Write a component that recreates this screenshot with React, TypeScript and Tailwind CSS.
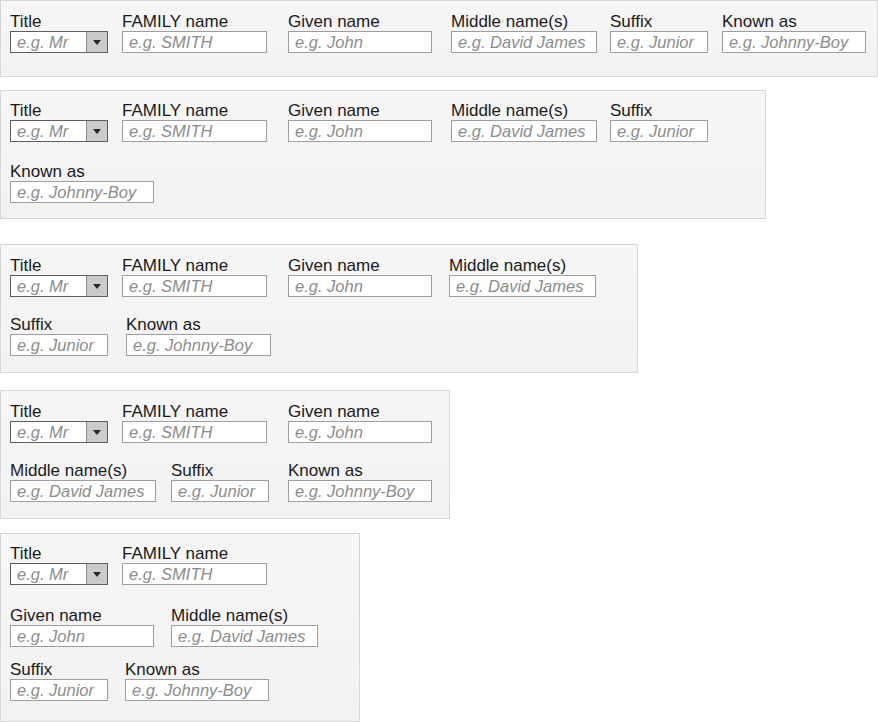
import React from "react";

type F = { label: string; ph: string; w: string; ml?: string; select?: boolean };

function Field({ label, ph, w, ml = "", select }: F) {
  return (
    <div className={`flex flex-col ${w} ${ml}`}>
      <div className="h-[19px] leading-[20px] text-[17px] text-[#1a1a1a] whitespace-nowrap">{label}</div>
      {select ? (
        <div className="flex h-[22px] border border-[#5e5e5e] bg-white">
          <div className="flex-1 pl-[6px] leading-[20px] text-[16.5px] italic text-[#8c8c8c] whitespace-nowrap">{ph}</div>
          <div className="w-[21px] h-full bg-[#cbcbcb] border-l border-[#8a8a8a] flex items-center justify-center">
            <svg width="8" height="5" viewBox="0 0 8 5">
              <path d="M0 0 L8 0 L4 5 Z" fill="#2a2a2a" />
            </svg>
          </div>
        </div>
      ) : (
        <input
          readOnly
          placeholder={ph}
          className="h-[22px] w-full border border-[#9e9e9e] bg-white pl-[6px] text-[16.5px] leading-[20px] outline-none placeholder:italic placeholder:text-[#8c8c8c]"
          style={{ fontFamily: '"Liberation Sans", Arial, sans-serif' }}
        />
      )}
    </div>
  );
}

const Title = (ml = "") => <Field label="Title" ph="e.g. Mr" w="w-[98px]" ml={ml} select />;

function Panel({ cls, children }: { cls: string; children: React.ReactNode }) {
  return (
    <div className={`border border-[#d6d6d6] bg-gradient-to-b from-[#f6f6f6] to-[#f2f2f2] pl-[9px] ${cls}`}>
      {children}
    </div>
  );
}

export default function App() {
  return (
    <div
      className="w-[878px] h-[722px] bg-white overflow-hidden"
      style={{ fontFamily: '"Liberation Sans", Arial, sans-serif' }}
    >
      <Panel cls="w-[878px] pt-[11px] pb-[23px]">
        <div className="flex">
          {Title()}
          <Field label="FAMILY name" ph="e.g. SMITH" w="w-[145px]" ml="ml-[14px]" />
          <Field label="Given name" ph="e.g. John" w="w-[144px]" ml="ml-[21px]" />
          <Field label="Middle name(s)" ph="e.g. David James" w="w-[146px]" ml="ml-[19px]" />
          <Field label="Suffix" ph="e.g. Junior" w="w-[98px]" ml="ml-[13px]" />
          <Field label="Known as" ph="e.g. Johnny-Boy" w="w-[144px]" ml="ml-[14px]" />
        </div>
      </Panel>

      <Panel cls="w-[766px] mt-[13px] pt-[10px] pb-[15px]">
        <div className="flex">
          {Title()}
          <Field label="FAMILY name" ph="e.g. SMITH" w="w-[145px]" ml="ml-[14px]" />
          <Field label="Given name" ph="e.g. John" w="w-[144px]" ml="ml-[21px]" />
          <Field label="Middle name(s)" ph="e.g. David James" w="w-[146px]" ml="ml-[19px]" />
          <Field label="Suffix" ph="e.g. Junior" w="w-[98px]" ml="ml-[13px]" />
        </div>
        <div className="flex mt-[20px]">
          <Field label="Known as" ph="e.g. Johnny-Boy" w="w-[144px]" />
        </div>
      </Panel>

      <Panel cls="w-[638px] mt-[25px] pt-[11px] pb-[16px]">
        <div className="flex">
          {Title()}
          <Field label="FAMILY name" ph="e.g. SMITH" w="w-[145px]" ml="ml-[14px]" />
          <Field label="Given name" ph="e.g. John" w="w-[144px]" ml="ml-[21px]" />
          <Field label="Middle name(s)" ph="e.g. David James" w="w-[147px]" ml="ml-[17px]" />
        </div>
        <div className="flex mt-[18px]">
          <Field label="Suffix" ph="e.g. Junior" w="w-[98px]" />
          <Field label="Known as" ph="e.g. Johnny-Boy" w="w-[145px]" ml="ml-[18px]" />
        </div>
      </Panel>

      <Panel cls="w-[450px] mt-[17px] pt-[11px] pb-[16px]">
        <div className="flex">
          {Title()}
          <Field label="FAMILY name" ph="e.g. SMITH" w="w-[145px]" ml="ml-[14px]" />
          <Field label="Given name" ph="e.g. John" w="w-[144px]" ml="ml-[21px]" />
        </div>
        <div className="flex mt-[18px]">
          <Field label="Middle name(s)" ph="e.g. David James" w="w-[146px]" />
          <Field label="Suffix" ph="e.g. Junior" w="w-[98px]" ml="ml-[15px]" />
          <Field label="Known as" ph="e.g. Johnny-Boy" w="w-[144px]" ml="ml-[19px]" />
        </div>
      </Panel>

      <Panel cls="w-[360px] mt-[14px] pt-[10px] pb-[20px]">
        <div className="flex">
          {Title()}
          <Field label="FAMILY name" ph="e.g. SMITH" w="w-[145px]" ml="ml-[14px]" />
        </div>
        <div className="flex mt-[21px]">
          <Field label="Given name" ph="e.g. John" w="w-[144px]" />
          <Field label="Middle name(s)" ph="e.g. David James" w="w-[147px]" ml="ml-[17px]" />
        </div>
        <div className="flex mt-[13px]">
          <Field label="Suffix" ph="e.g. Junior" w="w-[98px]" />
          <Field label="Known as" ph="e.g. Johnny-Boy" w="w-[144px]" ml="ml-[17px]" />
        </div>
      </Panel>
    </div>
  );
}
